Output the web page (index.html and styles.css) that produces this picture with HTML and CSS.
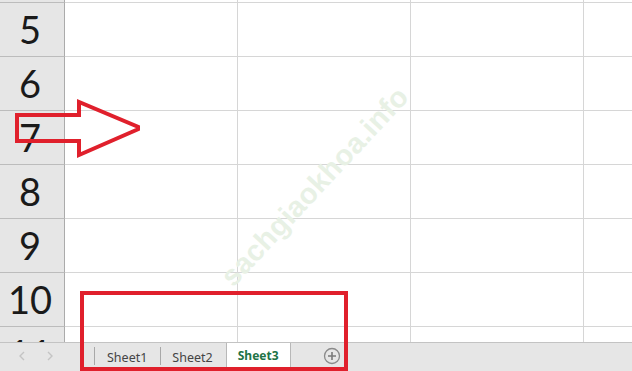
FILE: index.html
```html
<!DOCTYPE html>
<html>
<head>
<meta charset="utf-8">
<link rel="stylesheet" href="styles.css">
</head>
<body>
<div class="app">
  <div class="sheet">
    <div class="row partial">
      <div class="hdr"></div><div class="cell"></div><div class="cell"></div><div class="cell"></div><div class="cell last"></div>
    </div>
    <div class="row"><div class="hdr">5</div><div class="cell"></div><div class="cell"></div><div class="cell"></div><div class="cell last"></div></div>
    <div class="row"><div class="hdr">6</div><div class="cell"></div><div class="cell"></div><div class="cell"></div><div class="cell last"></div></div>
    <div class="row"><div class="hdr">7</div><div class="cell"></div><div class="cell"></div><div class="cell"></div><div class="cell last"></div></div>
    <div class="row"><div class="hdr">8</div><div class="cell"></div><div class="cell"></div><div class="cell"></div><div class="cell last"></div></div>
    <div class="row"><div class="hdr">9</div><div class="cell"></div><div class="cell"></div><div class="cell"></div><div class="cell last"></div></div>
    <div class="row"><div class="hdr">10</div><div class="cell"></div><div class="cell"></div><div class="cell"></div><div class="cell last"></div></div>
    <div class="row"><div class="hdr">11</div><div class="cell"></div><div class="cell"></div><div class="cell"></div><div class="cell last"></div></div>
    <div class="watermark">sachgiaokhoa.info</div>
  </div>
  <div class="tabbar">
    <div class="nav">
      <svg width="8" height="10" viewBox="0 0 8 10"><path d="M6 1 L2 5 L6 9" fill="none" stroke="#c4c4c4" stroke-width="1.4"/></svg>
      <svg width="8" height="10" viewBox="0 0 8 10"><path d="M2 1 L6 5 L2 9" fill="none" stroke="#c4c4c4" stroke-width="1.4"/></svg>
    </div>
    <div class="tabs">
      <div class="tab">Sheet1</div>
      <div class="tab">Sheet2</div>
      <div class="tab active">Sheet3</div>
    </div>
    <div class="add">
      <svg width="18" height="18" viewBox="0 0 18 18"><circle cx="9" cy="9" r="7.5" fill="none" stroke="#8a8a8a" stroke-width="1.3"/><path d="M9 5 V13 M5 9 H13" stroke="#7a7a7a" stroke-width="1.6"/></svg>
    </div>
  </div>
  <svg class="arrow" width="140" height="70" viewBox="0 0 140 70"><polygon points="17,20 79,20 79,7 141,33 79,60 79,46 17,46" fill="none" stroke="#e0202c" stroke-width="4" stroke-linejoin="miter"/></svg>
  <div class="highlight"></div>
</div>
</body>
</html>
```
FILE: styles.css
```css
* { box-sizing: border-box; }
html, body { margin: 0; padding: 0; }
body { width: 632px; height: 371px; overflow: hidden; background: #fff; font-family: "Liberation Sans", Arial, sans-serif; }
.app { position: relative; width: 632px; height: 371px; display: flex; flex-direction: column; }
.sheet { position: relative; height: 342px; overflow: hidden; display: flex; flex-direction: column; }
.row { display: flex; height: 54px; flex: 0 0 54px; }
.row.partial { height: 3px; flex: 0 0 3px; }
.hdr { width: 65px; flex: 0 0 65px; background: #e6e6e6; border-right: 1px solid #ababab; border-bottom: 1px solid #bcbcbc; display: flex; align-items: center; justify-content: center; padding-right: 4px; padding-bottom: 2px; font-family: Lato, "Open Sans", sans-serif; font-size: 38px; color: #1a1a1a; line-height: 1; }
.cell { width: 173px; flex: 0 0 173px; border-right: 1px solid #d6d6d6; border-bottom: 1px solid #d6d6d6; }
.cell.last { flex: 1 0 auto; border-right: none; }
.watermark { position: absolute; left: 185px; top: 170px; font-family: "Liberation Sans", Arial, sans-serif; font-size: 29px; font-weight: bold; color: #e8f1e5; transform: rotate(-47deg); transform-origin: center; white-space: nowrap; letter-spacing: 0.3px; }
.tabbar { height: 29px; flex: 0 0 29px; background: #e6e6e6; border-top: 1px solid #c3c3c3; display: flex; align-items: stretch; font-family: "Noto Sans", "Open Sans", sans-serif; font-size: 12.5px; color: #444; }
.nav { width: 95px; display: flex; align-items: center; padding-left: 18px; gap: 20px; border-right: 1px solid #a8a8a8; margin: 4px 0 6px; }
.tabs { display: flex; align-items: stretch; }
.tab { padding: 0 13px 0 12px; display: flex; align-items: center; margin: 0; position: relative; }
.tab + .tab:not(.active)::before { content: ""; position: absolute; left: 0; top: 4px; bottom: 6px; border-left: 1px solid #a8a8a8; }
.tab.active { background: #fff; color: #217346; font-weight: bold; font-size: 12px; border-left: 1px solid #b8b8b8; border-right: 1px solid #b8b8b8; border-bottom: 2px solid #217346; margin-bottom: 2px; padding: 0 11px 0 11px; }
.add { display: flex; align-items: center; padding-left: 32px; padding-bottom: 2px; }
.arrow { position: absolute; left: 0; top: 95px; }
.highlight { position: absolute; left: 80px; top: 291px; width: 268px; height: 80px; border: 4px solid #e0202c; }
```
